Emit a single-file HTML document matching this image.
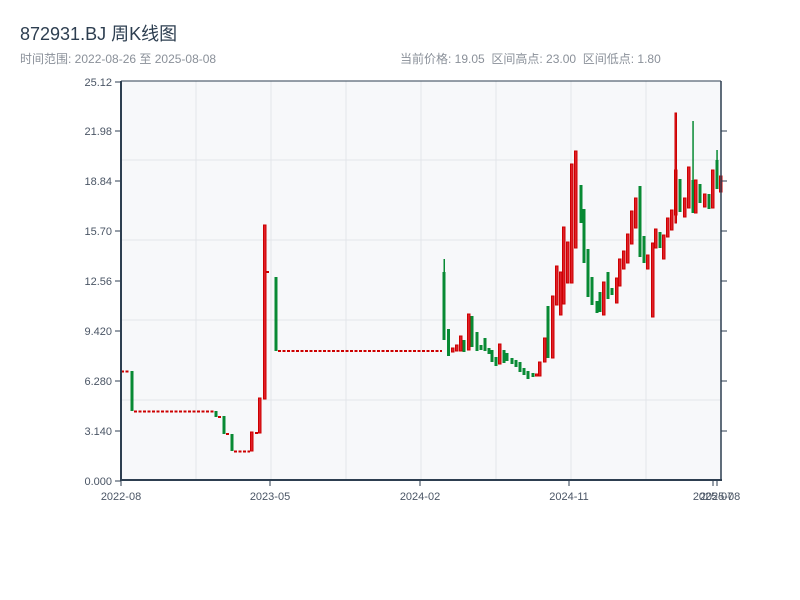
<!DOCTYPE html>
<html><head><meta charset="utf-8"><style>
body{margin:0;background:#fff;width:800px;height:600px;overflow:hidden;font-family:"Liberation Sans","Noto Sans CJK SC",sans-serif}
</style></head><body>
<svg width="800" height="600" xmlns="http://www.w3.org/2000/svg" style="position:absolute;left:0;top:0" font-family="Liberation Sans, Noto Sans CJK SC, sans-serif">
<text x="20" y="40" font-size="18" fill="#2d3e50">872931.BJ 周K线图</text>
<text x="20" y="63" font-size="12" fill="#8a9099">时间范围: 2022-08-26 至 2025-08-08</text>
<text x="400" y="63" font-size="12" fill="#8a9099">当前价格: 19.05&#160;&#160;区间高点: 23.00&#160;&#160;区间低点: 1.80</text>
<rect x="121" y="81" width="600" height="399" fill="#f7f8fa"/>
<g stroke="#e3e6ea" stroke-width="1">
<line x1="121" y1="160" x2="721" y2="160"/><line x1="121" y1="240" x2="721" y2="240"/><line x1="121" y1="320" x2="721" y2="320"/><line x1="121" y1="400" x2="721" y2="400"/>
<line x1="196" y1="81" x2="196" y2="480"/><line x1="271" y1="81" x2="271" y2="480"/><line x1="346" y1="81" x2="346" y2="480"/><line x1="421" y1="81" x2="421" y2="480"/><line x1="496" y1="81" x2="496" y2="480"/><line x1="571" y1="81" x2="571" y2="480"/><line x1="646" y1="81" x2="646" y2="480"/>
</g>
<g stroke="#cc0000" stroke-width="2" stroke-dasharray="3,1.5">
<line x1="121" y1="371.5" x2="130" y2="371.5"/>
<line x1="134" y1="411.5" x2="215" y2="411.5"/>
<line x1="218" y1="417" x2="222" y2="417"/>
<line x1="226" y1="434" x2="230" y2="434"/>
<line x1="234" y1="451.5" x2="250" y2="451.5"/>
<line x1="255" y1="433" x2="258" y2="433"/>
<line x1="266" y1="272" x2="270" y2="272"/>
<line x1="278" y1="351" x2="442" y2="351"/>
</g>
<g fill="#088a34">
<rect x="130.5" y="371" width="3" height="40"/>
<rect x="214.5" y="411" width="3" height="6"/>
<rect x="222.5" y="416" width="3" height="18"/>
<rect x="230.5" y="434" width="3" height="17"/>
<rect x="274.5" y="277" width="3" height="74"/>
<rect x="442.5" y="272" width="3" height="68"/><rect x="443.5" y="259" width="1.5" height="14"/>
<rect x="447" y="329" width="3" height="27"/>
<rect x="462.5" y="340" width="3" height="12"/>
<rect x="470.5" y="316" width="3" height="31"/>
<rect x="475.5" y="332" width="3" height="19"/>
<rect x="479.5" y="345" width="3" height="5"/>
<rect x="483.5" y="338" width="3" height="13"/>
<rect x="487.5" y="348" width="3" height="6"/>
<rect x="490.5" y="350" width="3" height="12"/>
<rect x="494.5" y="357" width="3" height="9"/>
<rect x="502.5" y="350" width="3" height="13"/>
<rect x="505.5" y="353" width="3" height="8"/>
<rect x="510.5" y="358" width="3" height="6"/>
<rect x="514.5" y="360" width="3" height="7"/>
<rect x="518.5" y="362" width="3" height="10"/>
<rect x="522.5" y="368" width="3" height="7"/>
<rect x="526.5" y="371" width="3" height="8"/>
<rect x="531.5" y="373" width="3" height="4"/>
<rect x="546.5" y="306" width="3" height="52"/>
<rect x="579.5" y="185" width="3" height="38"/>
<rect x="582.5" y="209" width="3" height="54"/>
<rect x="586.5" y="249" width="3" height="48"/>
<rect x="590.5" y="277" width="3" height="28"/>
<rect x="595.5" y="301" width="3" height="12"/>
<rect x="598.5" y="292" width="3" height="20"/>
<rect x="606.5" y="272" width="3" height="27"/>
<rect x="610.5" y="288" width="3" height="7"/>
<rect x="638.5" y="186" width="3" height="71"/>
<rect x="642.5" y="236" width="3" height="27"/>
<rect x="658.5" y="232" width="3" height="16"/>
<rect x="678.5" y="179" width="3" height="33"/>
<rect x="691.5" y="180" width="3" height="33"/><rect x="692.3" y="121" width="1.5" height="60"/>
<rect x="698.5" y="184" width="3" height="19"/>
<rect x="707.5" y="194" width="3" height="15"/>
<rect x="715.5" y="160" width="3" height="29"/><rect x="716.3" y="150" width="1.5" height="11"/>
</g>
<g fill="#e0202a" stroke="#cc0000" stroke-width="1">
<rect x="250.5" y="432" width="2.5" height="19"/>
<rect x="258.5" y="398" width="2.5" height="35"/>
<rect x="263.5" y="225" width="2.5" height="174"/>
<rect x="451.5" y="348" width="2.5" height="4"/>
<rect x="455.5" y="345" width="2.5" height="6"/>
<rect x="459.5" y="336" width="2.5" height="15"/>
<rect x="467.5" y="314" width="2.5" height="36"/>
<rect x="498.5" y="344" width="2.5" height="20"/>
<rect x="535.5" y="374" width="2.5" height="2"/>
<rect x="538.5" y="362" width="2.5" height="14"/>
<rect x="543.5" y="338" width="2.5" height="24"/>
<rect x="551.5" y="296" width="2.5" height="62"/>
<rect x="555.5" y="266" width="2.5" height="39"/>
<rect x="559.5" y="272" width="2.5" height="43"/>
<rect x="562.5" y="227" width="2.5" height="77"/>
<rect x="566.5" y="242" width="2.5" height="41"/>
<rect x="570.5" y="164" width="2.5" height="119"/>
<rect x="574.5" y="151" width="2.5" height="97"/>
<rect x="602.5" y="282" width="2.5" height="33"/>
<rect x="615.5" y="278" width="2.5" height="25"/>
<rect x="618.5" y="259" width="2.5" height="27"/>
<rect x="622.5" y="251" width="2.5" height="18"/>
<rect x="626.5" y="234" width="2.5" height="29"/>
<rect x="630.5" y="211" width="2.5" height="33"/>
<rect x="634.5" y="198" width="2.5" height="30"/>
<rect x="646.5" y="255" width="2.5" height="14"/>
<rect x="651.5" y="243" width="2.5" height="74"/>
<rect x="654.5" y="229" width="2.5" height="19"/>
<rect x="662.5" y="235" width="2.5" height="24"/>
<rect x="666.5" y="218" width="2.5" height="19"/>
<rect x="670.5" y="210" width="2.5" height="20"/>
<rect x="674.5" y="170" width="2.5" height="45"/><rect x="675" y="113" width="1.5" height="110"/>
<rect x="683.5" y="198" width="2.5" height="19"/>
<rect x="687.5" y="167" width="2.5" height="41"/>
<rect x="694.5" y="180" width="2.5" height="33"/>
<rect x="703.5" y="194" width="2.5" height="13"/>
<rect x="711.5" y="170" width="2.5" height="38"/>
<rect x="719.5" y="176" width="2.5" height="16"/>
</g>
<g stroke="#2d3e50">
<line x1="121" y1="81" x2="721" y2="81" stroke-width="1"/>
<line x1="721" y1="81" x2="721" y2="480" stroke-width="1.5"/>
<line x1="121" y1="81" x2="121" y2="481" stroke-width="2"/>
<line x1="120" y1="480" x2="722" y2="480" stroke-width="2"/>
<path d="M115 82H121M115 131H121M115 181H121M115 231H121M115 281H121M115 331H121M115 381H121M115 431H121M115 481H121" stroke-width="1"/>
<path d="M721 131H727M721 181H727M721 231H727M721 281H727M721 331H727M721 381H727M721 431H727" stroke-width="1"/>
<path d="M121 480V486M270 480V486M420 480V486M569 480V486M713 480V486M717 480V486" stroke-width="1"/>
</g>
<g font-size="11" fill="#4a5565" text-anchor="end">
<text x="112" y="86">25.12</text><text x="112" y="135">21.98</text><text x="112" y="185">18.84</text><text x="112" y="235">15.70</text><text x="112" y="285">12.56</text><text x="112" y="335">9.420</text><text x="112" y="385">6.280</text><text x="112" y="435">3.140</text><text x="112" y="485">0.000</text>
</g>
<g font-size="11" fill="#4a5565" text-anchor="middle">
<text x="121" y="500">2022-08</text><text x="270" y="500">2023-05</text><text x="420" y="500">2024-02</text><text x="569" y="500">2024-11</text><text x="713" y="500">2025-07</text><text x="720" y="500">2025-08</text>
</g>
</svg>
</body></html>
